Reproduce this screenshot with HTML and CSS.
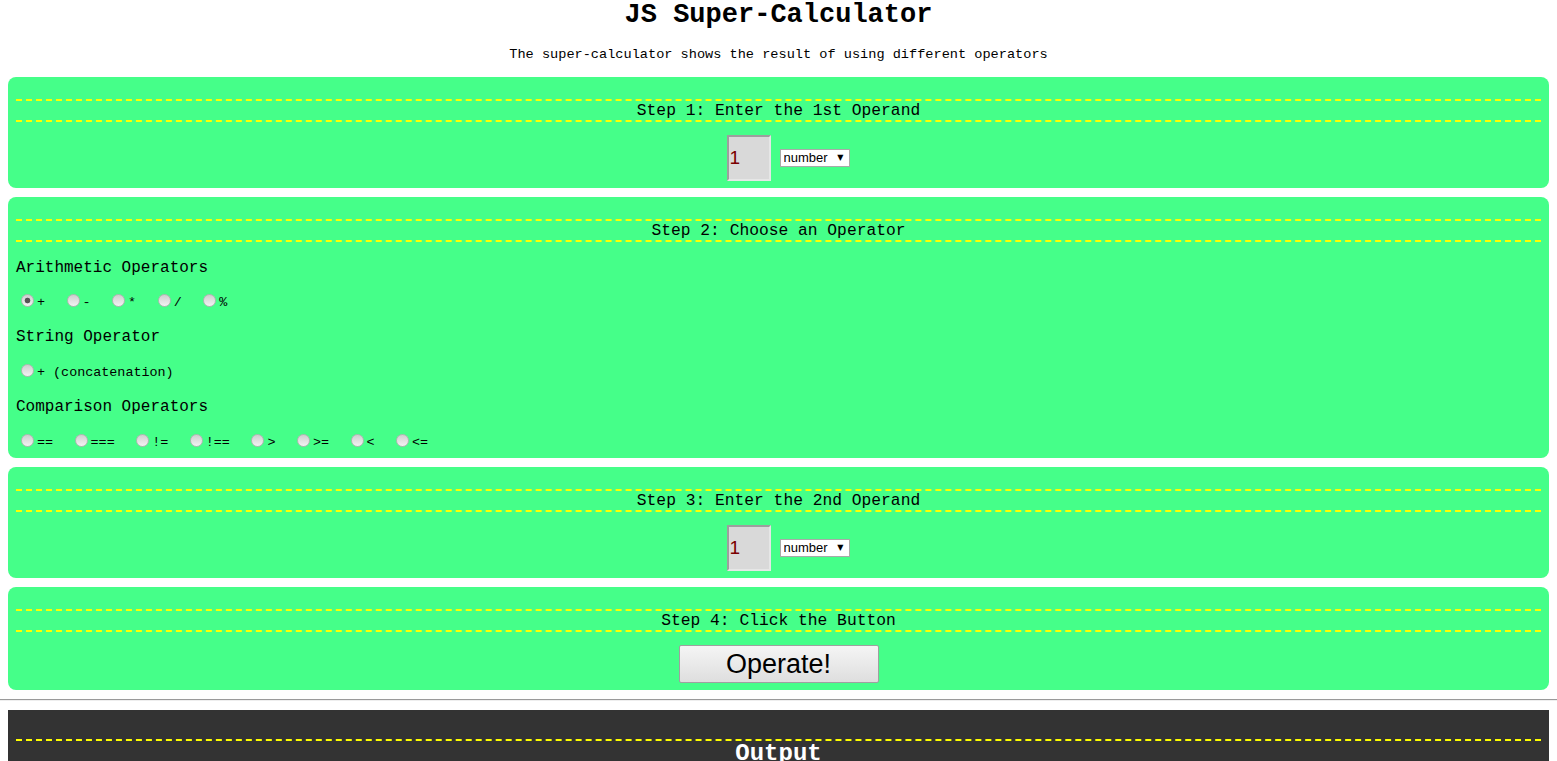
FILE: index.html
```html
<!DOCTYPE html>
<html>
<head>
<meta charset="utf-8">
<title>JS Super-Calculator</title>
<link rel="stylesheet" href="styles.css">
</head>
<body>
<h1 class="title">JS Super-Calculator</h1>
<p class="subtitle">The super-calculator shows the result of using different operators</p>

<section class="step">
  <h3 class="step-title">Step 1: Enter the 1st Operand</h3>
  <div class="operand-row">
    <input class="operand" type="text" value="1">
    <span class="select-wrap"><select class="type-select"><option>number</option><option>string</option></select></span>
  </div>
</section>

<section class="step step-ops">
  <h3 class="step-title">Step 2: Choose an Operator</h3>
  <h4 class="group-title">Arithmetic Operators</h4>
  <div class="radio-row radio-row-first">
    <label class="opt"><input type="radio" name="op" checked><span>+</span></label>
    <label class="opt"><input type="radio" name="op"><span>-</span></label>
    <label class="opt"><input type="radio" name="op"><span>*</span></label>
    <label class="opt"><input type="radio" name="op"><span>/</span></label>
    <label class="opt"><input type="radio" name="op"><span>%</span></label>
  </div>
  <h4 class="group-title">String Operator</h4>
  <div class="radio-row">
    <label class="opt"><input type="radio" name="op"><span>+ (concatenation)</span></label>
  </div>
  <h4 class="group-title">Comparison Operators</h4>
  <div class="radio-row">
    <label class="opt"><input type="radio" name="op"><span>==</span></label>
    <label class="opt"><input type="radio" name="op"><span>===</span></label>
    <label class="opt"><input type="radio" name="op"><span>!=</span></label>
    <label class="opt"><input type="radio" name="op"><span>!==</span></label>
    <label class="opt"><input type="radio" name="op"><span>&gt;</span></label>
    <label class="opt"><input type="radio" name="op"><span>&gt;=</span></label>
    <label class="opt"><input type="radio" name="op"><span>&lt;</span></label>
    <label class="opt"><input type="radio" name="op"><span>&lt;=</span></label>
  </div>
</section>

<section class="step">
  <h3 class="step-title">Step 3: Enter the 2nd Operand</h3>
  <div class="operand-row">
    <input class="operand" type="text" value="1">
    <span class="select-wrap"><select class="type-select"><option>number</option><option>string</option></select></span>
  </div>
</section>

<section class="step step-button">
  <h3 class="step-title">Step 4: Click the Button</h3>
  <div class="button-row">
    <button class="operate" type="button">Operate!</button>
  </div>
</section>

<hr class="divider">

<section class="output">
  <h2 class="output-title">Output</h2>
  <div class="output-body"></div>
</section>
</body>
</html>
```

FILE: styles.css
```css
html, body {
  margin: 0;
  padding: 0;
  background: #ffffff;
}

body {
  font-family: "Liberation Mono", "Courier New", monospace;
  color: #000;
}

.title {
  margin: 0;
  font-size: 27px;
  line-height: 30px;
  font-weight: bold;
  text-align: center;
}

.subtitle {
  margin: 17px 0 14px;
  font-size: 13.6px;
  line-height: 16px;
  text-align: center;
}

.step {
  display: flow-root;
  background: #45ff89;
  border-radius: 8px;
  margin: 0 8px 9px;
  padding: 0 8px 7px;
}

.step-title {
  margin: 22px 0 0;
  padding: 0;
  border-top: 2px dashed #ffff00;
  border-bottom: 2px dashed #ffff00;
  font-size: 16.3px;
  line-height: 19px;
  font-weight: normal;
  text-align: center;
}

.operand-row {
  display: flex;
  justify-content: center;
  align-items: center;
  gap: 9px;
  margin-top: 13px;
  padding-left: 19px;
}

.operand {
  box-sizing: border-box;
  width: 44px;
  height: 46px;
  margin: 0;
  padding: 0 1px;
  background: #d9d9d9;
  border: 2px solid;
  border-color: #9e9e9e #e6e6e6 #e6e6e6 #9e9e9e;
  font-family: "Liberation Sans", Arial, sans-serif;
  font-size: 19px;
  color: #7a0000;
  outline: none;
}

.select-wrap {
  position: relative;
  display: inline-block;
}

.select-wrap::after {
  content: "\25BC";
  position: absolute;
  right: 6px;
  top: 3px;
  font-family: "DejaVu Sans", sans-serif;
  font-size: 8px;
  line-height: 12px;
  color: #000;
  pointer-events: none;
}

.type-select {
  appearance: none;
  -webkit-appearance: none;
  box-sizing: border-box;
  width: 70px;
  height: 18px;
  margin: 0;
  padding: 0 0 0 3px;
  background: #fff;
  border: 1px solid #a9a9a9;
  border-radius: 0;
  font-family: "Liberation Sans", Arial, sans-serif;
  font-size: 13px;
  line-height: 16px;
  color: #000;
}

.step-ops {
  padding-bottom: 9px;
}

.group-title {
  margin: 17px 0 0;
  font-size: 16px;
  line-height: 18px;
  font-weight: normal;
}

.group-title + .radio-row {
  margin-top: 15px;
}

.group-title + .radio-row-first {
  margin-top: 14px;
}

.radio-row + .group-title {
  margin-top: 19px;
}

.radio-row {
  display: flex;
  align-items: center;
  height: 18px;
  font-size: 13.4px;
}

.opt {
  display: inline-flex;
  align-items: center;
  margin-right: 16.5px;
}

.opt span {
  position: relative;
  top: 2px;
}

.opt input {
  appearance: none;
  -webkit-appearance: none;
  box-sizing: border-box;
  width: 13px;
  height: 13px;
  margin: 0 3px 0 5px;
  border-radius: 50%;
  border: 1px solid #b4b4b4;
  background: linear-gradient(#cfcfcf, #f2f2f2);
}

.opt input:checked {
  background: radial-gradient(circle, #555 0, #555 2.5px, transparent 3.2px), linear-gradient(#cfcfcf, #f2f2f2);
}

.button-row {
  display: flex;
  justify-content: center;
  margin-top: 13px;
}

.step-button {
  padding-bottom: 7px;
}

.operate {
  box-sizing: border-box;
  width: 200px;
  height: 38px;
  margin: 0;
  padding: 0;
  border: 1px solid #a0a0a0;
  border-radius: 2px;
  background: linear-gradient(#f5f5f5, #dedede);
  font-family: "Liberation Sans", Arial, sans-serif;
  font-size: 27px;
  color: #000;
}

.divider {
  margin: 6px 0 9px;
  border: 0;
  border-top: 1px solid #9a9a9a;
  border-bottom: 1px solid #eeeeee;
  height: 0;
}

.output {
  background: #333333;
  margin: 0 8px;
  padding: 29px 8px 0;
  min-height: 120px;
}

.output-title {
  margin: 0;
  border-top: 2px dashed #ffff00;
  color: #ffffff;
  font-size: 24px;
  line-height: 26px;
  font-weight: bold;
  text-align: center;
}
```
